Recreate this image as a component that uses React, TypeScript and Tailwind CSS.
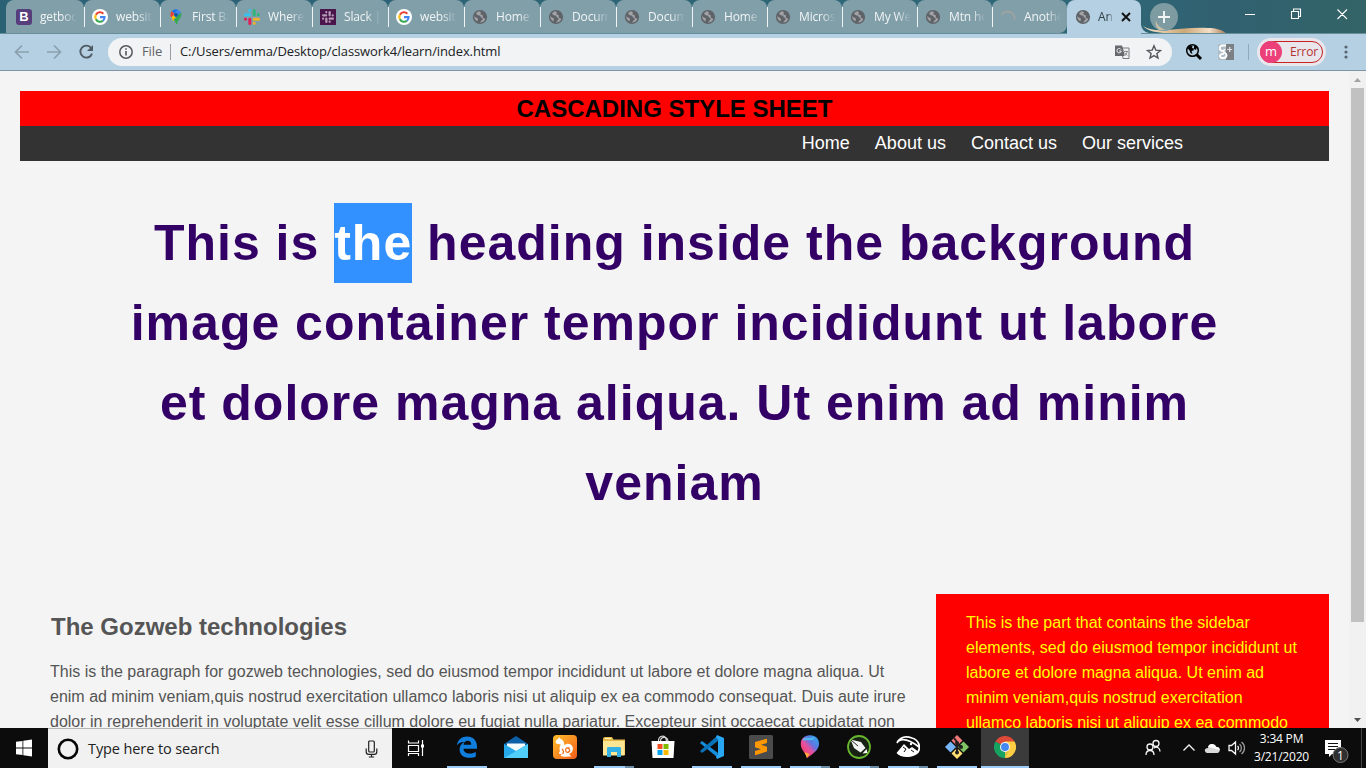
import React from "react";

type Kind = "bootstrap" | "google" | "maps" | "slack" | "slackDark" | "globe" | "loading";

function Globe() {
  return (
    <svg className="h-4 w-4 shrink-0" viewBox="0 0 16 16">
      <circle cx="8" cy="8" r="7.1" fill="#5f6368" />
      <path d="M7 2.2C5 3 4 4 4.2 5.2c1.400.300 1.800 1.500 3.200 1.400 1.300 0 1.400.900 1 1.700 1.600.100 2.600 1 2.200 2.100-.300 1-1.500.800-1.700 1.900-.100.800-.600 1.200-1.300 1.400 2.500.200 4.800-1.200 5.700-3.600-.900-1-1.900-.600-2.400-1.600-.400-.900.400-1.500-.300-2.200-.800-.700-1.500-.300-2-1.100-.500-.900.500-1.400.200-2.200z" fill="#fff" fillOpacity=".42" />
      <path d="M2.300 7.300c1.100.200 1 1.300 2.200 1.500 1.100.300 1.600.900 1.300 1.900-.100.600-.500.900-.400 1.700C3.500 11.500 2.200 9.700 2.300 7.300z" fill="#fff" fillOpacity=".42" />
    </svg>
  );
}

function SlackMark({ dark }: { dark?: boolean }) {
  const c = dark ? ["#b79bb8", "#b79bb8", "#b79bb8", "#b79bb8"] : ["#36c5f0", "#2eb67d", "#ecb22e", "#e01e5a"];
  return (
    <svg className="h-4 w-4 shrink-0" viewBox="0 0 16 16">
      {dark && <rect width="16" height="16" fill="#4a154b" />}
      <g transform={dark ? "translate(2 2) scale(.75)" : undefined}>
        <rect x="0" y="4.300" width="7" height="3" rx="1.500" fill={c[0]} />
        <rect x="4.300" y="0" width="2.800" height="3" rx="1.300" fill={c[0]} />
        <rect x="8.700" y="0" width="3" height="7.300" rx="1.500" fill={c[1]} />
        <rect x="12.800" y="4.300" width="3" height="3" rx="1.400" fill={c[1]} />
        <rect x="8.700" y="8.700" width="7.300" height="3" rx="1.500" fill={c[2]} />
        <rect x="8.700" y="12.800" width="3" height="3" rx="1.400" fill={c[2]} />
        <rect x="4.300" y="8.700" width="3" height="7.300" rx="1.500" fill={c[3]} />
        <rect x="0" y="8.700" width="3" height="3" rx="1.400" fill={c[3]} />
      </g>
    </svg>
  );
}

function TabIcon({ kind }: { kind: Kind }) {
  switch (kind) {
    case "bootstrap":
      return <span className="flex h-4 w-4 shrink-0 items-center justify-center rounded-[3px] bg-[#563d7c] font-['Liberation_Sans',sans-serif] text-[13px] leading-none font-bold text-white">B</span>;
    case "google":
      return (
        <svg className="h-4 w-4 shrink-0" viewBox="0 0 16 16">
          <circle cx="8" cy="8" r="8" fill="#fff" />
          <g fill="none" strokeWidth="2.100">
            <path d="M11.400 4.700A4.700 4.700 0 0 0 3.900 5.700" stroke="#ea4335" />
            <path d="M3.900 5.700a4.700 4.700 0 0 0 0 4.600" stroke="#fbbc05" />
            <path d="M3.900 10.300a4.700 4.700 0 0 0 7.100 1.400" stroke="#34a853" />
            <path d="M11 11.700A4.600 4.600 0 0 0 12.600 8.100H8" stroke="#4285f4" />
          </g>
        </svg>
      );
    case "maps":
      return (
        <svg className="h-4 w-4 shrink-0" viewBox="0 0 16 16">
          <path d="M8 .300a5.500 5.500 0 0 0-4.300 2l3 2.500L10 .700A5 5 0 0 0 8 .300z" fill="#1a73e8" />
          <path d="M3.700 2.300A5.500 5.500 0 0 0 3.300 8.600L7 4.900z" fill="#ea4335" />
          <path d="M10 .700a5.500 5.500 0 0 1 3 2.700L5.200 11.500 3.300 8.600z" fill="#4285f4" />
          <path d="M3.300 8.600 6.600 5a2 2 0 0 0 3 2.600l-4.400 4.600z" fill="#fbbc04" />
          <path d="M13 3.400c1.200 3-.3 5-1.700 6.700-1.200 1.600-1.600 3-2 4.700-.2 1-.8 1-1.100 0-.6-1.500-1.400-2.500-2.700-4z" fill="#34a853" />
          <circle cx="8" cy="5.800" r="1.900" fill="#155a9c" />
        </svg>
      );
    case "slack":
      return <SlackMark />;
    case "slackDark":
      return <SlackMark dark />;
    case "loading":
      return (
        <svg className="h-4 w-4 shrink-0" viewBox="0 0 16 16">
          <path d="M1.500 6A7 7 0 0 1 14.500 10.500" fill="none" stroke="#a4a3a0" strokeWidth="1.700" />
        </svg>
      );
    default:
      return <Globe />;
  }
}

const tabs: { kind: Kind; title: string; wide: boolean }[] = [
  { kind: "google", title: "website", wide: true },
  { kind: "maps", title: "First Ba", wide: true },
  { kind: "slack", title: "Where", wide: true },
  { kind: "slackDark", title: "Slack | l", wide: true },
  { kind: "google", title: "website", wide: true },
  { kind: "globe", title: "Home", wide: true },
  { kind: "globe", title: "Docum", wide: true },
  { kind: "globe", title: "Docum", wide: true },
  { kind: "globe", title: "Home", wide: false },
  { kind: "globe", title: "Micros", wide: false },
  { kind: "globe", title: "My We", wide: false },
  { kind: "globe", title: "Mtn ho", wide: false },
  { kind: "loading", title: "Anothe", wide: false },
];

function TabTitle({ text }: { text: string }) {
  return (
    <span className="ml-2 w-[37px] shrink-0 overflow-hidden [mask-image:linear-gradient(to_right,black_60%,transparent)] text-[12px] leading-4 tracking-[-0.15px] whitespace-nowrap text-[#f1f4f5]">
      {text}
    </span>
  );
}

function TabStrip() {
  return (
    <div className="relative flex h-[33px] bg-[linear-gradient(90deg,#2b6175_0%,#2e6878_80%,#316070_90%,#336466_100%)]">
      <div className="ml-[6px] flex h-[33px] w-[78px] shrink-0 items-center rounded-t-lg bg-[#819fa9] pl-[10px]">
        <TabIcon kind="bootstrap" />
        <TabTitle text="getboot" />
      </div>
      {tabs.map((t, i) => (
        <div key={i} className={`flex h-[33px] shrink-0 items-center rounded-t-lg bg-[#819fa9] ${t.wide ? "w-[76px]" : "w-[75px]"} ${i === 12 ? "rounded-br-lg" : ""}`}>
          <span className="h-5 w-px bg-[#eef3f4]" />
          <span className="w-[7px]" />
          <TabIcon kind={t.kind} />
          <TabTitle text={t.title} />
        </div>
      ))}
      <div className="flex h-[34px] w-[74px] shrink-0 items-center rounded-t-lg bg-[#b4d0e2] pl-2">
        <Globe />
        <span className="ml-[7px] w-4 overflow-hidden [mask-image:linear-gradient(to_right,black_60%,transparent)] text-[12px] whitespace-nowrap text-[#334148]">Another</span>
        <svg className="ml-[7px] h-[10px] w-[10px]" viewBox="0 0 10 10"><path d="M1 1l8 8M9 1L1 9" stroke="#111" strokeWidth="1.900" /></svg>
      </div>
      <svg className="h-[33px] w-[86px] shrink-0" viewBox="0 0 86 33">
        <defs>
          <linearGradient id="hair"><stop offset="0" stopColor="#f7ead0" /><stop offset=".5" stopColor="#cda777" /><stop offset=".8" stopColor="#f6dfc6" /><stop offset="1" stopColor="#a97d55" /></linearGradient>
        </defs>
        <path d="M0 25v8h8C3 32 1 29 0 25z" fill="#b4d0e2" />
        <path d="M2 26c6 4 15 5 24 4 15-1 27-3 41-2 8 0 14 2 18 5H26C16 33 7 31 2 26z" fill="url(#hair)" />
        <path d="M14 18c0 5 4 9 12 12l-6 1C16 27 14 23 14 18z" fill="#e6d2ac" />
        <circle cx="23" cy="17" r="14" fill="#809da3" fillOpacity=".96" />
        <path d="M15 20c1 5 4 8 10 10h-7c-3-3-4-6-3-10z" fill="#c5bda4" />
        <path d="M17 17h12M23 11v12" stroke="#f3f5f5" strokeWidth="1.900" />
      </svg>
      <svg className="h-[33px] w-[138px] shrink-0" viewBox="0 0 138 33" fill="none" stroke="#fff" strokeWidth="1.100">
        <path d="M18 14.500h10M64.500 11.500h7v7h-7zM66.500 11v-2h7v7.500h-2M110.500 9.500l9.500 9.500M120 9.500L110.500 19" />
      </svg>
    </div>
  );
}

function Toolbar() {
  return (
    <div className="flex h-[38px] items-center border-t border-b border-t-[#668f9c] border-b-[#7f94a5] bg-[#b4d0e2]">
      <svg className="h-9 w-[108px] shrink-0" viewBox="0 0 108 36" fill="none">
        <path d="M29 18H16M22 11.500L15.500 18l6.500 6.500M47 18h13M54 11.500l6.500 6.500-6.500 6.500" stroke="#8ba0af" strokeWidth="1.700" />
        <path d="M91.200 14.100A6 6 0 1 0 92 19.600" stroke="#505b64" strokeWidth="1.900" />
        <path d="M93 11v6h-6z" fill="#505b64" />
      </svg>
      <div className="flex h-7 w-[1064px] shrink-0 items-center rounded-full bg-[#f1f3f4]">
        <svg className="ml-[11px] h-[14px] w-[14px]" viewBox="0 0 14 14"><circle cx="7" cy="7" r="6.200" fill="none" stroke="#55595d" strokeWidth="1.500" /><path d="M7 6v4.500M7 3.200v1.600" stroke="#55595d" strokeWidth="1.600" /></svg>
        <span className="ml-[9px] w-[28px] text-[13px] tracking-[-0.1px] text-[#5f6368]">File</span>
        <span className="h-4 w-px bg-[#9a9da0]" />
        <span className="ml-[9px] text-[13px] tracking-[-0.11px] whitespace-nowrap text-[#202124]">C:/Users/emma/Desktop/classwork4/learn/index.html</span>
        <svg className="mr-4 ml-auto h-4 w-4" viewBox="0 0 16 16">
          <path d="M7.500 4H15v10.500H9z" fill="#f1f3f4" stroke="#777b7f" />
          <path d="M1 1.500h7l3.500 10.500H1z" fill="#666a6e" />
          <path d="M7 5.500A2.200 2.200 0 1 0 7.300 7H5.200M9.500 7.500h4M11.500 6.500v1M13 7.500c-.5 2-1.500 3-3 4M10.500 9l2.500 2.500" fill="none" stroke="#f1f3f4" />
          <path d="M10 7.500h4M12 6.500v1M13.300 7.500c-.5 2-1.500 3-2.500 4M11 9l2.500 2.500" fill="none" stroke="#777b7f" strokeWidth=".8" />
        </svg>
        <svg className="mr-[10px] h-4 w-4" viewBox="0 0 16 16"><path d="M8 1.800l1.800 4.300 4.700.400-3.600 3 1.100 4.600L8 11.600l-4 2.500 1.100-4.600-3.600-3 4.700-.4z" fill="none" stroke="#55595d" strokeWidth="1.400" /></svg>
      </div>
      <svg className="ml-[13px] h-[18px] w-[18px] shrink-0" viewBox="0 0 18 18">
        <circle cx="7.500" cy="7.500" r="5.800" fill="#b4d0e2" stroke="#000" strokeWidth="1.500" />
        <path d="M2.500 5l3-3 2 1-.5 2 2 .5-.5 2-2 .5 1 3-2-1-1-2.500zM9 2l3 2-1 3-2-1z" fill="#000" />
        <path d="M11.500 11.500l4.500 4.500" stroke="#000" strokeWidth="3" />
      </svg>
      <svg className="ml-[15px] h-4 w-4 shrink-0" viewBox="0 0 16 16">
        <rect width="16" height="16" rx="1" fill="#aebdc7" /><path d="M8 0h8v16H8z" fill="#7c8084" />
        <path d="M8 1.500H4.500a2.700 2.700 0 1 0 1 5.200C4.500 8.500 8.500 8.800 8.500 11c0 4-6.500 4-6.500 1 0-2 3-2.300 4-2.200" fill="none" stroke="#fff" strokeWidth="1.900" />
        <path d="M11.700 3v5M9.200 5.500h5" stroke="#dfe3e5" strokeWidth="1.200" />
      </svg>
      <span className="ml-[14px] h-4 w-px shrink-0 bg-[#91a9b8]" />
      <div className="ml-[8px] flex h-7 w-[69px] shrink-0 items-center rounded-full bg-[#e9e6ec] pl-[3px]">
        <div className="flex h-[22px] w-[63px] items-center rounded-full border border-[#c5221f]">
          <span className="-ml-px flex h-[22px] w-[22px] items-center justify-center rounded-full bg-[#ec407a] text-[13px] leading-none text-white"><span className="-mt-[2px]">m</span></span>
          <span className="ml-2 text-[12px] tracking-[-0.1px] text-[#b3342f]">Error</span>
        </div>
      </div>
      <svg className="ml-[17px] h-4 w-4 shrink-0" viewBox="0 0 16 16" fill="#596671"><circle cx="3" cy="3" r="1.600" /><circle cx="3" cy="8" r="1.600" /><circle cx="3" cy="13" r="1.600" /></svg>
    </div>
  );
}

function Page() {
  return (
    <div className="flex h-[657px] overflow-hidden bg-[#f4f4f4] font-['Liberation_Sans',Arial,sans-serif]">
      <div className="w-[1349px] shrink-0 px-5 pt-5">
        <h1 className="h-[35px] bg-[#ff0000] text-center text-[24px] leading-[35px] font-bold text-black">CASCADING STYLE SHEET</h1>
        <nav className="flex h-[35px] justify-end gap-[25px] bg-[#333333] pr-[146px] text-[18px] leading-[34px] whitespace-nowrap text-white">
          <a>Home</a><a>About us</a><a>Contact us</a><a>Our services</a>
        </nav>
        <h2 className="mt-[42px] h-[391px] text-center text-[50px] leading-[80px] font-bold tracking-[1px] whitespace-nowrap text-[#330066]">
          This is <span className="inline-block h-20 bg-[#3390ff] align-top text-white">the</span> heading inside the background<br />
          image container tempor incididunt ut labore<br />
          et dolore magna aliqua. Ut enim ad minim<br />
          veniam
        </h2>
        <div className="flex">
          <main className="w-[916px] pl-[30px] whitespace-nowrap text-[#555555]">
            <h3 className="mt-[14px] pl-px text-[24px] leading-[38px] font-bold">The Gozweb technologies</h3>
            <p className="mt-[13px] text-[16px] leading-[25px]">
              This is the paragraph for gozweb technologies, sed do eiusmod tempor incididunt ut labore et dolore magna aliqua. Ut<br />
              enim ad minim veniam,quis nostrud exercitation ullamco laboris nisi ut aliquip ex ea commodo consequat. Duis aute irure<br />
              dolor in reprehenderit in voluptate velit esse cillum dolore eu fugiat nulla pariatur. Excepteur sint occaecat cupidatat non
            </p>
          </main>
          <aside className="h-[134px] w-[393px] bg-[#ff0000] pt-4 pl-[30px] text-[16px] leading-[25px] whitespace-nowrap text-[#ffff00]">
            This is the part that contains the sidebar<br />
            elements, sed do eiusmod tempor incididunt ut<br />
            labore et dolore magna aliqua. Ut enim ad<br />
            minim veniam,quis nostrud exercitation<br />
            ullamco laboris nisi ut aliquip ex ea commodo
          </aside>
        </div>
      </div>
      <div className="flex w-[17px] shrink-0 flex-col items-center bg-[#f1f1f1]">
        <svg className="h-[17px] w-[17px]" viewBox="0 0 17 17"><path d="M5 11l3.500-4 3.500 4z" fill="#a3a3a3" /></svg>
        <div className="h-[534px] w-[13px] bg-[#c1c1c1]" />
        <svg className="mt-auto h-[17px] w-[17px]" viewBox="0 0 17 17"><path d="M5 7l3.500 4L12 7z" fill="#505050" /></svg>
      </div>
    </div>
  );
}

function AppSlot({ children, mode = "single", active }: { children: React.ReactNode; mode?: "none" | "single" | "multi"; active?: boolean }) {
  return (
    <div className={`flex h-10 shrink-0 flex-col items-center justify-end ${active ? "w-12 bg-[#3b3b3b]" : "w-[49px]"}`}>
      <div className="flex h-[38px] items-center">{children}</div>
      <div className={`flex h-[2px] ${active ? "w-12" : "w-10"}`}>
        {mode !== "none" && <span className="flex-1 bg-[#9bcdf8]" />}
        {mode === "multi" && <span className="w-[9px] bg-[#6c8ba4]" />}
      </div>
    </div>
  );
}

function Taskbar() {
  return (
    <div className="flex h-10 overflow-hidden bg-[#0c0c0c]">
      <svg className="h-10 w-12 shrink-0" viewBox="0 0 48 40" fill="#fff"><path d="M16 13.800l6.500-.9V19.500H16zM23.300 12.800L32 11.600v7.900h-8.700zM16 20.400h6.500v6.700l-6.500-.9zM23.300 20.400H32v8l-8.700-1.200z" /></svg>
      <div className="flex h-10 w-[344px] shrink-0 items-center border-t border-[#b5b5b5] bg-[#f1f1f1]">
        <svg className="ml-[9px] h-[22px] w-[22px]" viewBox="0 0 22 22"><circle cx="11" cy="11" r="9.200" fill="none" stroke="#050505" strokeWidth="2.600" /></svg>
        <span className="ml-[9px] text-[14.500px] tracking-[-0.1px] whitespace-nowrap text-[#222]">Type here to search</span>
        <svg className="mr-[14px] ml-auto h-[18px] w-[13px]" viewBox="0 0 13 18" fill="none" stroke="#222" strokeWidth="1.200"><rect x="3.700" y="1" width="5.600" height="11" rx="1" /><path d="M1.200 8.500v3.200c0 2 1 2.600 2.500 2.600h5.600c1.500 0 2.500-.6 2.500-2.600V8.500M6.500 14.500V17M3.800 17h5.400" /></svg>
      </div>
      <div className="flex w-[50px] shrink-0 items-center justify-center">
        <svg className="ml-[-2px] h-[18px] w-[18px]" viewBox="0 0 18 18" fill="none" stroke="#fff" strokeWidth="1.200"><path d="M1.500 1.500v2.500h10V1.500M1.500 6.500h10v6h-10zM1.500 17v-2.500h10V17M15.500 1v16" /><path d="M14 5.500h3v3h-3z" fill="#fff" stroke="none" /></svg>
      </div>
      <AppSlot>
        <svg className="h-[22px] w-[22px]" viewBox="0 0 22 22"><path d="M.800 9.500C1.800 3.500 6 .500 11 .500c6 0 10 4 10 10v2.300H7.500c.2 3.500 3.500 5 6.800 4.800 2.200-.1 4-.7 5.500-1.600v4.400c-2 1-4 1.400-6.300 1.400-5.800 0-9.900-3-9.900-8.400 0-3.500 1.900-6 5-7.400C4.700 5.800 2 7.400.800 9.500zM7.600 8.800h7.600c0-2.800-1.200-4-3.500-4-2.200 0-3.700 1.500-4.100 4z" fill="#0f7edc" /></svg>
      </AppSlot>
      <AppSlot mode="none">
        <svg className="h-6 w-6" viewBox="0 0 24 24"><path d="M0 9L12 1l12 8v14H0z" fill="#0c60a8" /><path d="M3 8.500h18v5l-9 4-9-4z" fill="#f5fafd" /><path d="M0 9l12 7 12-7v14H0z" fill="#25a9eb" /><path d="M0 23L16 13.700 24 9v14z" fill="#50cdf8" /></svg>
      </AppSlot>
      <AppSlot mode="none">
        <svg className="h-6 w-6" viewBox="0 0 24 24"><defs><linearGradient id="uc" y2="1"><stop stopColor="#ffc02b" /><stop offset="1" stopColor="#f35b1a" /></linearGradient></defs><rect width="24" height="24" rx="4" fill="url(#uc)" /><path d="M7.500 21c3 1 8 .8 11.500.2-1.700-.7-2.800-1.300-2.500-2.500 4-1.500 4.700-6.700 1.200-9.200-2.300-1.500-5.200-.7-6.200.7-.2-3-1.500-5.700-4.700-6.600l-.4-1.500-1.400 2C2.500 5 2 7.500 3.800 8.800c1.200.8 2.600 0 3.900.8C6.500 12 6 14 7 16.300c-1 .8-1.500 2.300-.2 2.700h2z" fill="#fff" /><path d="M14.500 13.300a2 2 0 1 1-1.800 2.500c-.6-2.400 1.800-4 3.800-2.800M9 14c1.500 1.500 2 3.500.5 5" fill="none" stroke="#ef7425" strokeWidth="1.300" /></svg>
      </AppSlot>
      <AppSlot mode="multi">
        <svg className="h-5 w-[22px]" viewBox="0 0 22 20"><path d="M0 2c0-1 .5-2 2-2h7l1.500 2.500H22V18H0z" fill="#e7b948" /><path d="M0 4h21.500v14.500H0z" fill="#ffe694" /><path d="M2 1.500h6" stroke="#fff3bd" /><path d="M4 11.500c0-1 .5-1.500 1.500-1.500h11c1 0 1.500.5 1.500 1.500V20h-4v-5H8v5H4z" fill="#36b1e6" /></svg>
      </AppSlot>
      <AppSlot mode="none">
        <svg className="h-6 w-6" viewBox="0 0 24 24"><path d="M7.500 7C7 0 14.500-1 15.500 6M9.500 6c.5-5 7.500-5 7.500 1" fill="none" stroke="#d8d8d8" strokeWidth="1.200" /><path d="M.5 6h23L22.500 23h-21z" fill="#fff" /><path d="M6.500 9h5v5h-5z" fill="#f25022" /><path d="M12.500 9h5v5h-5z" fill="#7fba00" /><path d="M6.500 15h5v5h-5z" fill="#00a4ef" /><path d="M12.500 15h5v5h-5z" fill="#ffb900" /></svg>
      </AppSlot>
      <AppSlot>
        <svg className="h-6 w-6" viewBox="0 0 24 24"><path d="M0 8l2-2 16 12-1 4z" fill="#168ede" /><path d="M0 16l2 2L18 6l-1-5z" fill="#0873b9" /><path d="M17 0l7 3v18l-7 3-1-2 2-3V5l-2-3z" fill="#29a7f3" /></svg>
      </AppSlot>
      <AppSlot>
        <svg className="h-6 w-6" viewBox="0 0 24 24"><rect width="24" height="24" rx="1.500" fill="#4b4b4b" /><path d="M6 7l12-3.300v4.200L12 9.700l6 2v4.800L6 20.200V16l6-1.800-6-2z" fill="#ff9800" /></svg>
      </AppSlot>
      <AppSlot mode="multi">
        <svg className="h-6 w-5" viewBox="0 0 20 24"><defs><linearGradient id="pa" x1="1" y1="0" x2=".1" y2="1"><stop stopColor="#23b4e9" /><stop offset=".4" stopColor="#5f75e3" /><stop offset=".6" stopColor="#e7509f" /><stop offset=".85" stopColor="#ec416e" /><stop offset="1" stopColor="#ffa22f" /></linearGradient></defs><path d="M10 .3C4 .3.800 4 .800 9c0 6.500 4.500 7.500 6.200 14 5-3.500 12-8 12-14C19 4 16 .300 10 .300z" fill="url(#pa)" /><path d="M3 5C8 2 9 6 14 3" fill="none" stroke="#48d6f4" strokeWidth="2" opacity=".7" /><path d="M4.500 17l5 2L7 23z" fill="#ffae34" /></svg>
      </AppSlot>
      <AppSlot mode="multi">
        <svg className="h-6 w-6" viewBox="0 0 24 24"><circle cx="12" cy="12" r="11" fill="#172114" stroke="#68b62d" strokeWidth="1.800" /><path d="M3.500 4.500L14 7l4.500 6-5 4.500L7 13z" fill="#f3f3f3" /><path d="M4 5l7 6" stroke="#222" /><path d="M19.500 14l1 4-5 .500z" fill="#fff" /></svg>
      </AppSlot>
      <AppSlot mode="multi">
        <svg className="h-6 w-6" viewBox="0 0 24 24"><path d="M1 8C4 2 10 1 16 3c7 2 9 9 6 14M2.500 6C7 3 14 5 23 12" fill="none" stroke="#fff" strokeWidth="1.800" /><path d="M.5 18L8 9l5 5 3-2 7 5c-4 6-18 7-22.500 1z" fill="#fff" /><path d="M7 12l3 2-2 3M15 15l3 2" stroke="#111" fill="none" /><circle cx="15" cy="9" r="1.200" fill="#fff" /></svg>
      </AppSlot>
      <AppSlot>
        <svg className="h-6 w-6" viewBox="0 0 24 24"><path d="M12 0l5.500 5.500L12 11 6.500 5.500z" fill="#f07878" /><path d="M18.500 6.500L24 12l-5.500 5.500L13 12z" fill="#80c463" /><path d="M12 13l5.500 5.500L12 24l-5.500-5.500z" fill="#ffe071" /><path d="M5.500 6.500L11 12l-5.500 5.500L0 12z" fill="#76b5f7" /><path d="M9 3l3 4v11M12 8l4 4" fill="none" stroke="#211f20" strokeWidth="2" /><circle cx="12" cy="8" r="2" fill="#211f20" /><circle cx="16" cy="12" r="2" fill="#211f20" /><circle cx="12" cy="17.500" r="2" fill="#211f20" /></svg>
      </AppSlot>
      <AppSlot active>
        <svg className="h-[22px] w-[22px]" viewBox="0 0 24 24"><path d="M12 12L1.600 6A12 12 0 0 1 22.400 6z" fill="#df4938" /><path d="M12 12L1.600 6A12 12 0 0 0 12 24l5.200-9z" fill="#16a362" /><path d="M12 12L12 24A12 12 0 0 0 22.400 6H12z" fill="#ffce43" /><path d="M12 6h10.400H12a6 6 0 0 0-6 6L1.600 6l5.200 9A6 6 0 0 0 17.200 15L12 24" fill="#16a362" opacity=".2" /><circle cx="12" cy="12" r="5.500" fill="#f5f5f5" /><circle cx="12" cy="12" r="4.300" fill="#4688f1" /></svg>
      </AppSlot>
      <div className="ml-auto flex h-10 shrink-0 items-center text-white">
        <svg className="h-10 w-[112px]" viewBox="1138 0 112 40" fill="none" stroke="#f5f5f5" strokeWidth="1.300">
          <circle cx="1150" cy="19" r="3" /><path d="M1146 27c0-6 8-6 8 0" /><circle cx="1156" cy="15.500" r="3" /><path d="M1154 20c3-2 6 0 6 3.500" />
          <path d="M1183.500 22.500l5.500-5.500 5.500 5.500" />
          <path d="M1207 25c-3-1-3-5 1-5 1-5 7-5 8.500-1 3-1 5 5 1 6z" fill="#d9d9d9" stroke="none" /><path d="M1208 19c1-4 6-4 8 0 3-.5 4 2 4 3-4 0-7-3-12-3z" fill="#fff" stroke="none" />
          <path d="M1229 17.500h2.500l4-3.500v12l-4-3.500h-2.500zM1237.500 18c1.300 1 1.300 3 0 4" /><path d="M1239.500 16c2.500 2 2.500 6 0 8M1241.500 14c4 3 4 9 0 12" stroke="#999" />
        </svg>
        <div className="flex w-[63px] flex-col items-center text-center text-[12px] leading-[18px] tracking-[-0.2px] whitespace-nowrap"><span>3:34 PM</span><span>3/21/2020</span></div>
        <svg className="h-10 w-[53px]" viewBox="1313 0 53 40"><path d="M1325 12h16v14h-9l-3 3v-3h-4z" fill="#fff" /><path d="M1328 15.500h10M1328 18.500h10M1328 21.500h7" stroke="#111" /><circle cx="1340.500" cy="27" r="7.500" fill="#303030" stroke="#777" /><text x="1340.500" y="31.500" fill="#fff" fontSize="12" textAnchor="middle">1</text><path d="M1361.500 0v40" stroke="#444" /></svg>
      </div>
    </div>
  );
}

export default function App() {
  return (
    <div className="h-[768px] w-[1366px] overflow-hidden font-['Open_Sans','Noto_Sans',sans-serif]">
      <TabStrip />
      <Toolbar />
      <Page />
      <Taskbar />
    </div>
  );
}
